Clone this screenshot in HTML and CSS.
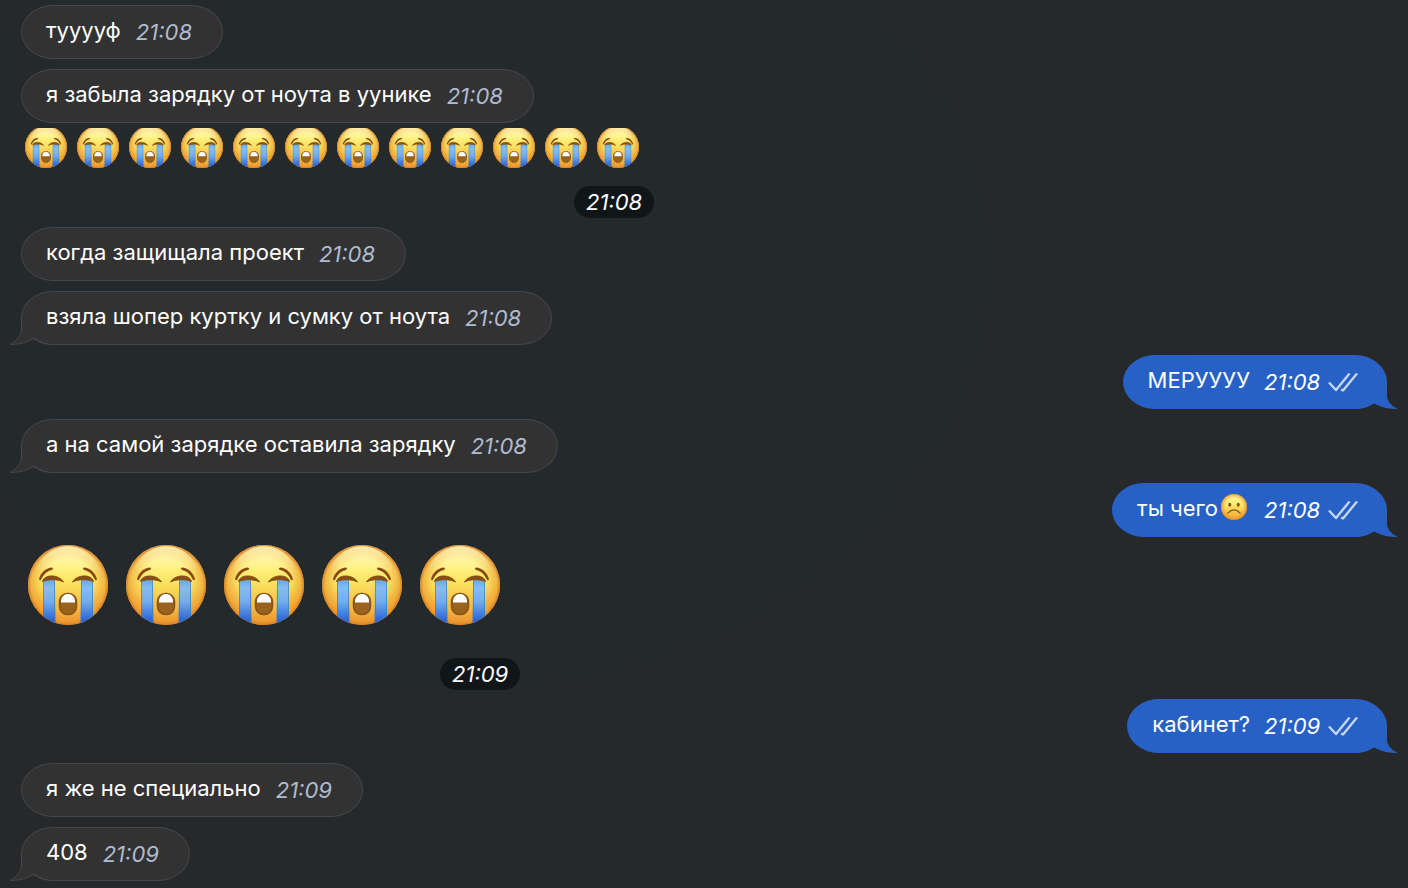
FILE: index.html
```html
<!DOCTYPE html>
<html lang="ru">
<head>
<meta charset="utf-8">
<title>Чат</title>
<link rel="stylesheet" href="styles.css">
</head>
<body>
<svg class="sprite" aria-hidden="true">
  <defs>
    <linearGradient id="skin" x1="0" y1="0" x2="0" y2="1">
      <stop offset="0" stop-color="#fff3b0"/>
      <stop offset=".2" stop-color="#fff68a"/>
      <stop offset=".45" stop-color="#fbe564"/>
      <stop offset=".75" stop-color="#f8bd43"/>
      <stop offset="1" stop-color="#f3a63b"/>
    </linearGradient>
    <radialGradient id="rim">
      <stop offset=".65" stop-color="#e58a24" stop-opacity="0"/>
      <stop offset=".92" stop-color="#e58a24" stop-opacity=".5"/>
      <stop offset="1" stop-color="#d8781c" stop-opacity=".95"/>
    </radialGradient>
    <linearGradient id="shine" x1="0" y1="0" x2="0" y2="1">
      <stop offset="0" stop-color="#fff3b4" stop-opacity=".9"/>
      <stop offset=".35" stop-color="#fff3b4" stop-opacity="0"/>
    </linearGradient>
    <linearGradient id="water" x1="0" y1="0" x2="0" y2="1">
      <stop offset="0" stop-color="#61a6e3"/>
      <stop offset=".2" stop-color="#86bcf0"/>
      <stop offset=".5" stop-color="#72acec"/>
      <stop offset=".9" stop-color="#2b65d6"/>
    </linearGradient>
    <clipPath id="face"><circle cx="40" cy="40" r="40"/></clipPath>
  </defs>
  <symbol id="sob" viewBox="0 0 80 80">
    <circle cx="40" cy="40" r="40" fill="url(#skin)"/>
    <circle cx="40" cy="40" r="40" fill="url(#rim)"/>
    <ellipse cx="40" cy="38" rx="34" ry="37" fill="url(#shine)"/>
    <g clip-path="url(#face)">
      <path d="M15 35q6-3 12 0l.5 45H15z" fill="url(#water)"/>
      <path d="M53 35q6-3 12 0v45H52.500z" fill="url(#water)"/>
      <path d="M15.500 36v44M26.500 36v44M53.500 36v44M64.500 36v44" stroke="#397fb0" stroke-opacity=".65" fill="none"/>
    </g>
    <path d="M11 34C13 27 18 23 24 22.500q2 1 0 2.500C19 26 15 30 13 35q-1.500 1-2-1zM69 34C67 27 62 23 56 22.500q-2 1 0 2.500C61 26 65 30 67 35q1.500 1 2-1z" fill="#8a4b12"/>
    <path d="M14.500 36.500C16 29 31 29 35.500 37 30 34 20 34 14.500 36.500zM65.500 36.500C64 29 49 29 44.500 37 50 34 60 34 65.500 36.500z" fill="#8a4d12" stroke="#8a4d12" stroke-linejoin="round"/>
    <rect x="31.500" y="48.500" width="17" height="21" rx="8" fill="#99621d" stroke="#84521a" stroke-width="1.500"/>
    <path d="M33 57.500v-1c0-10 14-10 14 0v1z" fill="#fff"/>
  </symbol>
  <symbol id="frown" viewBox="0 0 80 80">
    <circle cx="40" cy="40" r="40" fill="url(#skin)"/>
    <circle cx="40" cy="40" r="40" fill="url(#rim)"/>
    <ellipse cx="27" cy="33" rx="4.500" ry="6" fill="#7d511c"/>
    <ellipse cx="53" cy="33" rx="4.500" ry="6" fill="#7d511c"/>
    <path d="M21 59q19-20 38 0" fill="none" stroke="#7d511c" stroke-width="4" stroke-linecap="round"/>
  </symbol>
  <symbol id="read" viewBox="0 0 30 20">
    <path d="M1 10.500L8 18 21.500 1.500M13 17.500L15 18.500 29 1.500" fill="none" stroke="#c2d5f5" stroke-width="2.400" stroke-linejoin="round"/>
  </symbol>
  <symbol id="tail-in" viewBox="0 0 46 28">
    <path d="M12 0H46V27C38 27.500 31 25 25 21 18 26 9 27.500 1 27.500 8 24 12.500 18 12.500 12V0z" fill="#323232"/>
    <path d="M12.500 0V12C12.500 18 8 24 1 27.500 9 27.500 18 26 25 21 31 25 37 27.500 46 27.500" fill="none" stroke="#45474a"/>
  </symbol>
  <symbol id="tail-out" viewBox="0 0 46 28">
    <path d="M34 0H0V28C8 28 15 26 21 22 28 27 37 28 45 28 38 25 34 20 34 14z" fill="#2861c5"/>
  </symbol>
</svg>

<main class="chat">
  <article class="msg"><span class="text">тууууф</span><time>21:08</time></article>
  <article class="msg"><span class="text">я забыла зарядку от ноута в уунике</span><time>21:08</time></article>
  <article class="stickers stickers--small">
    <div class="strip" role="img" aria-label="Двенадцать плачущих смайлов">
      <svg><use href="#sob"/></svg><svg><use href="#sob"/></svg><svg><use href="#sob"/></svg><svg><use href="#sob"/></svg>
      <svg><use href="#sob"/></svg><svg><use href="#sob"/></svg><svg><use href="#sob"/></svg><svg><use href="#sob"/></svg>
      <svg><use href="#sob"/></svg><svg><use href="#sob"/></svg><svg><use href="#sob"/></svg><svg><use href="#sob"/></svg>
    </div>
    <time>21:08</time>
  </article>
  <article class="msg"><span class="text">когда защищала проект</span><time>21:08</time></article>
  <article class="msg"><svg class="tail"><use href="#tail-in"/></svg><span class="text">взяла шопер куртку и сумку от ноута</span><time>21:08</time></article>
  <article class="msg msg--out"><svg class="tail"><use href="#tail-out"/></svg><span class="text">МЕРУУУУ</span><time>21:08</time><svg class="read" role="img" aria-label="Прочитано"><use href="#read"/></svg></article>
  <article class="msg"><svg class="tail"><use href="#tail-in"/></svg><span class="text">а на самой зарядке оставила зарядку</span><time>21:08</time></article>
  <article class="msg msg--out"><svg class="tail"><use href="#tail-out"/></svg><span class="text">ты чего</span><svg class="emoji" role="img" aria-label="Грустный смайл"><use href="#frown"/></svg><time>21:08</time><svg class="read" role="img" aria-label="Прочитано"><use href="#read"/></svg></article>
  <article class="stickers stickers--big">
    <div class="strip" role="img" aria-label="Пять плачущих смайлов">
      <svg><use href="#sob"/></svg><svg><use href="#sob"/></svg><svg><use href="#sob"/></svg><svg><use href="#sob"/></svg><svg><use href="#sob"/></svg>
    </div>
    <time>21:09</time>
  </article>
  <article class="msg msg--out"><svg class="tail"><use href="#tail-out"/></svg><span class="text">кабинет?</span><time>21:09</time><svg class="read" role="img" aria-label="Прочитано"><use href="#read"/></svg></article>
  <article class="msg"><span class="text">я же не специально</span><time>21:09</time></article>
  <article class="msg"><svg class="tail"><use href="#tail-in"/></svg><span class="text">408</span><time>21:09</time></article>
</main>
</body>
</html>
```
FILE: styles.css
```css
* { box-sizing: border-box; }

body {
  margin: 0;
  min-height: 100vh;
  background: radial-gradient(ellipse 60% 75% at 32% 30%, #242a2c 0%, #24292b 60%, #272829 100%) #272829;
  font-family: Inter, "Noto Sans", sans-serif;
  font-size: 22px;
  line-height: 32px;
  color: #fff;
}

.sprite {
  position: absolute;
  width: 0;
  height: 0;
}

.chat {
  display: flex;
  flex-direction: column;
  align-items: flex-start;
  padding: 5px 21px 7px;
}

.msg {
  position: relative;
  display: flex;
  padding: 8px 28px 10px 24px;
  border: 1px solid #45474a;
  border-radius: 32px / 27px;
  background: #323232;
}

.msg + .msg { margin-top: 10px; }
.stickers + .msg { margin-top: 9px; }

.text {
  position: relative;
  white-space: nowrap;
}

time { font-style: italic; }

.msg time {
  position: relative;
  min-width: 58px;
  margin-left: 15px;
  padding-top: 2px;
  color: #aebbd0;
}

.msg--out {
  align-self: flex-end;
  border-color: #2861c5;
  background: #2861c5;
}

.msg--out time {
  margin-left: 14px;
  color: #fff;
}

.tail {
  position: absolute;
  left: -13px;
  bottom: -1px;
  width: 46px;
  height: 28px;
}

.msg--out .tail {
  left: auto;
  right: -13px;
}

.read {
  position: relative;
  width: 30px;
  height: 20px;
  margin: 8px 0 0 6px;
}

.emoji {
  width: 26px;
  height: 26px;
  margin: 2px 3px 0 3px;
}

.stickers {
  display: flex;
  flex-direction: column;
}

.strip {
  display: flex;
  align-items: flex-end;
}

.strip svg { flex: none; }

.stickers time {
  align-self: flex-end;
  min-width: 80px;
  padding: 0 10px 0 12px;
  border-radius: 16px;
  background: #101517;
}

.stickers--small { margin-top: 5px; }

.stickers--small .strip {
  gap: 10px;
  height: 40px;
  padding: 0 15px 0 4px;
  margin-bottom: 18px;
  overflow: hidden;
}

.stickers--small svg {
  width: 42px;
  height: 42px;
}

.stickers--big { margin-top: 8px; }

.stickers--big .strip {
  gap: 18px;
  padding: 0 20px 0 7px;
  margin-bottom: 33px;
}

.stickers--big svg {
  width: 80px;
  height: 80px;
}
```
